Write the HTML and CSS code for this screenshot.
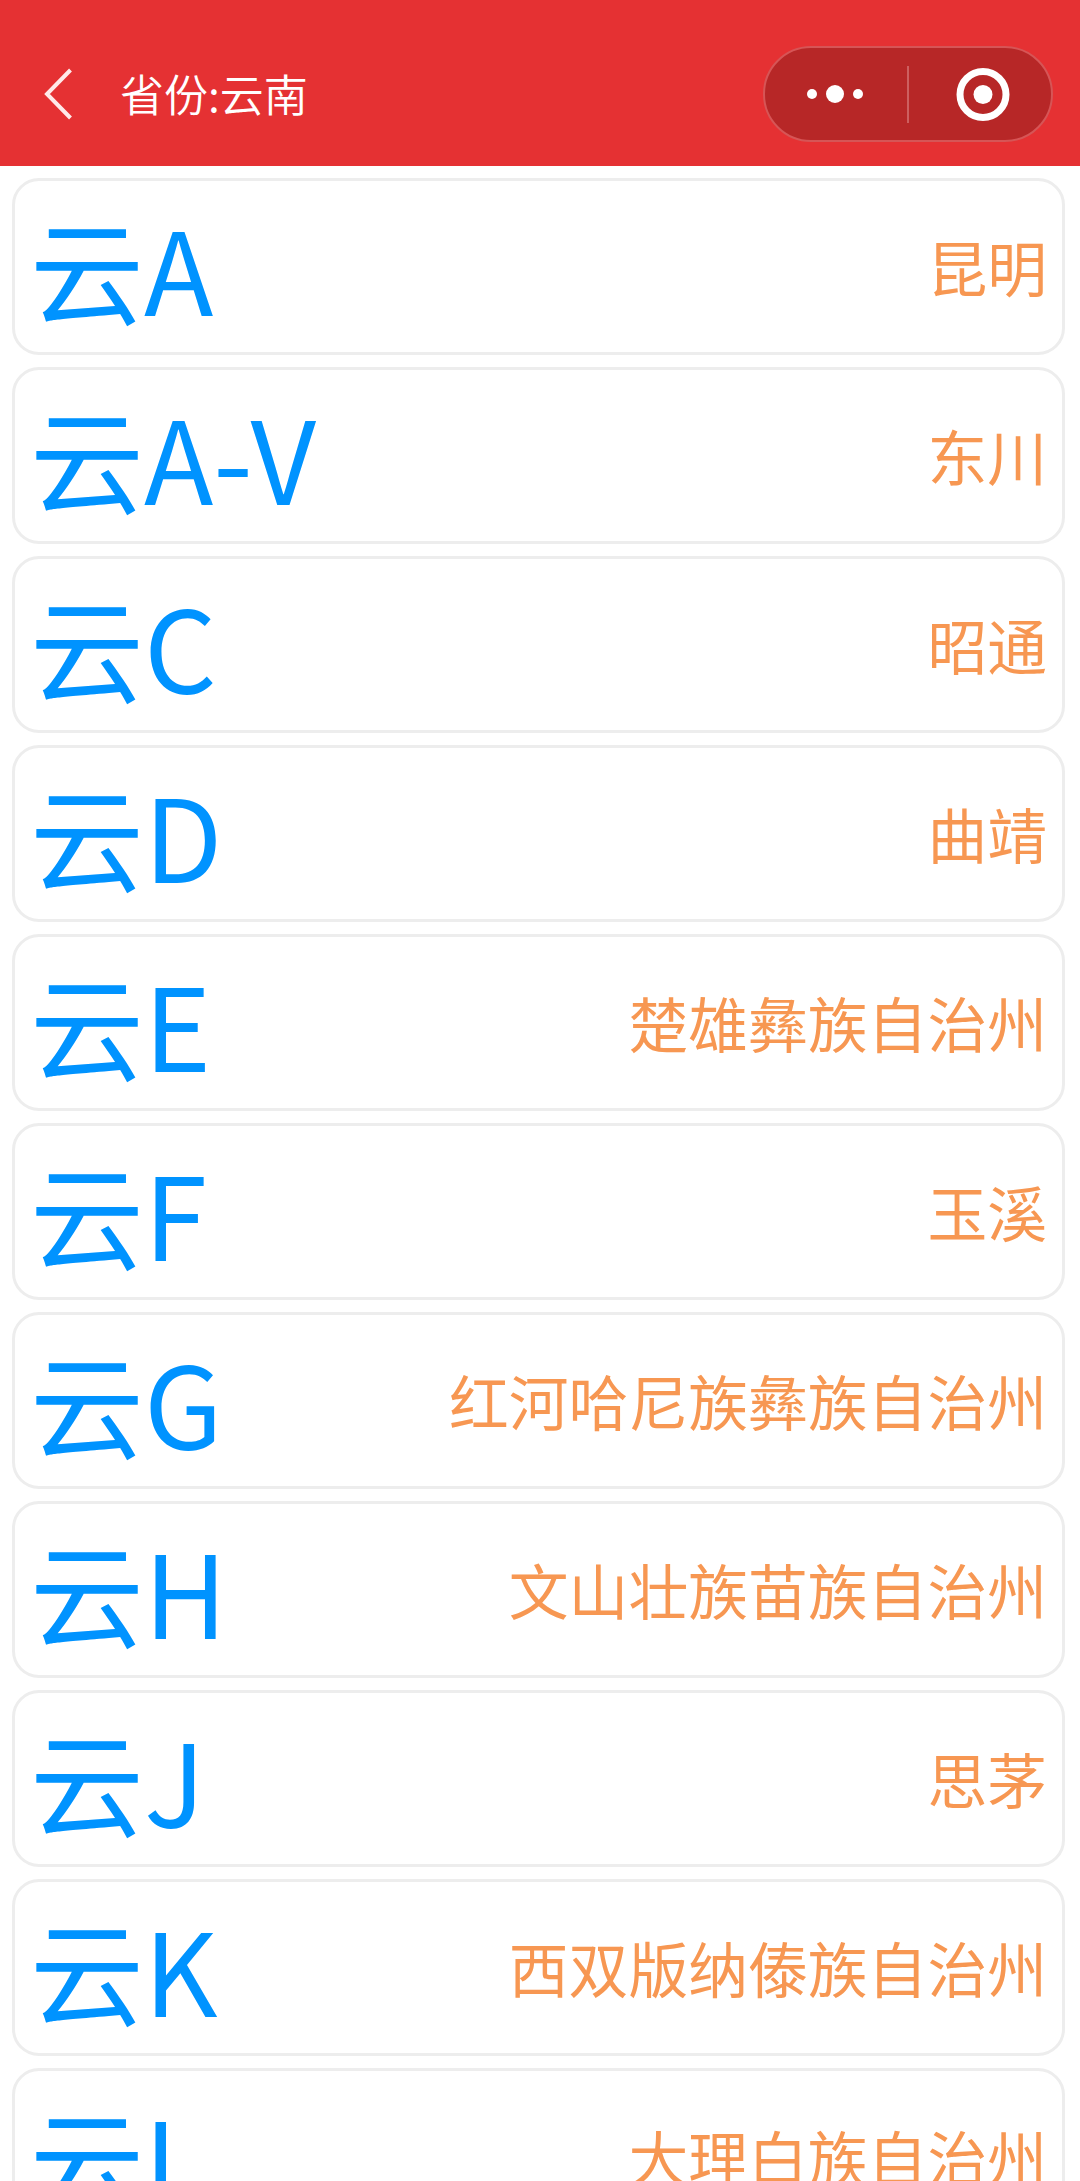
FILE: index.html
```html
<!DOCTYPE html>
<html lang="zh-CN">

<head>
    <meta charset="UTF-8">
    <meta name="viewport" content="width=device-width, initial-scale=1.0">
    <title>省份:云南</title>
    <link rel="stylesheet" href="styles.css">
</head>

<body>

    <header class="navbar">
        <svg class="back" width="32" height="56" viewBox="0 0 32 56">
            <path d="M27.5 4 L4 28 L27.5 52" fill="none" stroke="#ffe9e9" stroke-width="4" />
        </svg>
        <h1 class="title">省份:云南</h1>
        <div class="capsule">
            <svg class="more" width="58" height="20" viewBox="0 0 58 20">
                <circle cx="6" cy="10" r="5" fill="#fff" />
                <circle cx="29" cy="10" r="9" fill="#fff" />
                <circle cx="52" cy="10" r="5" fill="#fff" />
            </svg>
            <span class="divider"></span>
            <svg class="close" width="54" height="54" viewBox="0 0 54 54">
                <circle cx="27" cy="27.5" r="23" fill="none" stroke="#fff" stroke-width="7" />
                <circle cx="27" cy="27.5" r="9.5" fill="#fff" />
            </svg>
        </div>
    </header>

    <ul class="plate-list">
        <li class="plate-item">
            <span class="code">云A</span>
            <span class="city">昆明</span>
        </li>
        <li class="plate-item">
            <span class="code">云A-V</span>
            <span class="city">东川</span>
        </li>
        <li class="plate-item">
            <span class="code">云C</span>
            <span class="city">昭通</span>
        </li>
        <li class="plate-item">
            <span class="code">云D</span>
            <span class="city">曲靖</span>
        </li>
        <li class="plate-item">
            <span class="code">云E</span>
            <span class="city">楚雄彝族自治州</span>
        </li>
        <li class="plate-item">
            <span class="code">云F</span>
            <span class="city">玉溪</span>
        </li>
        <li class="plate-item">
            <span class="code">云G</span>
            <span class="city">红河哈尼族彝族自治州</span>
        </li>
        <li class="plate-item">
            <span class="code">云H</span>
            <span class="city">文山壮族苗族自治州</span>
        </li>
        <li class="plate-item">
            <span class="code">云J</span>
            <span class="city">思茅</span>
        </li>
        <li class="plate-item">
            <span class="code">云K</span>
            <span class="city">西双版纳傣族自治州</span>
        </li>
        <li class="plate-item">
            <span class="code">云L</span>
            <span class="city">大理白族自治州</span>
        </li>
    </ul>

</body>

</html>
```
FILE: styles.css
```css
* {
    box-sizing: border-box;
}

body {
    height: 100vh;
    margin: 0;
    overflow: hidden;
    background-color: #fff;
    font-family: 'Noto Sans CJK SC', sans-serif;
}

.navbar {
    display: flex;
    align-items: center;
    height: 166px;
    padding: 22px 27px 0 43px;
    background-color: #e53133;
}

.title {
    margin: 0 auto 2px 45px;
    color: #fff;
    font-size: 44px;
    font-weight: 350;
    line-height: 60px;
}

.capsule {
    display: flex;
    align-items: center;
    width: 290px;
    height: 96px;
    padding-left: 41px;
    border: 2px solid #d65556;
    border-radius: 48px;
    background-color: #b72727;
}

.divider {
    width: 2px;
    height: 57px;
    margin: 0 47px 0 43px;
    background-color: #cd5f5f;
}

.plate-list {
    margin: 0;
    padding: 12px 15px 0 12px;
    list-style: none;
}

.plate-item {
    display: flex;
    justify-content: space-between;
    align-items: center;
    height: 177px;
    margin-bottom: 12px;
    padding: 0 15px;
    border: 3px solid #ededed;
    border-radius: 27px;
    white-space: nowrap;
}

.code {
    color: #0093ff;
    font-size: 114px;
    line-height: 171px;
}

.city {
    margin-bottom: 1px;
    color: #f79752;
    font-size: 59.8px;
    line-height: 90px;
}
```
